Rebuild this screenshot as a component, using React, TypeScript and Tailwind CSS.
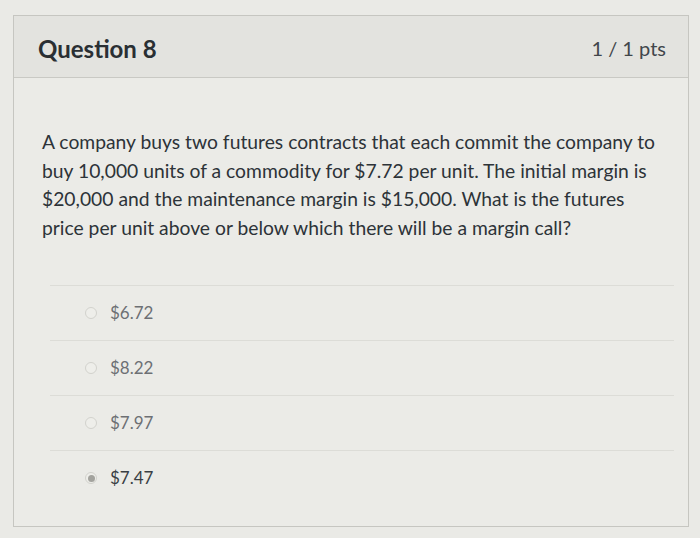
import React from 'react';

const answers = [
  { label: '$6.72', selected: false },
  { label: '$8.22', selected: false },
  { label: '$7.97', selected: false },
  { label: '$7.47', selected: true },
];

const Radio: React.FC<{ selected: boolean }> = ({ selected }) => (
  <span className="flex h-[12px] w-[12px] items-center justify-center rounded-full border border-[#d2d2cd] bg-[#eeeeea]">
    {selected && <span className="h-[7px] w-[7px] rounded-full bg-[#a3a39e]" />}
  </span>
);

const App: React.FC = () => {
  return (
    <div
      className="h-[538px] w-[700px] overflow-hidden bg-[#eaeae6] pl-[13px] pt-[15px]"
      style={{ fontFamily: 'Lato, "Open Sans", sans-serif' }}
    >
      <div className="flex h-[512px] w-[676px] flex-col border border-[#c6c6c1] bg-[#ebebe7]">
        {/* header */}
        <div className="flex h-[62px] items-center justify-between border-b border-[#c9c9c4] bg-[#e3e3df] pl-[24px] pr-[22px]">
          <h2 className="pt-[4px] text-[24px] font-bold text-[#2a2f33]">Question 8</h2>
          <span className="pt-[2px] text-[20px] text-[#41464b]">1 / 1 pts</span>
        </div>

        {/* question body */}
        <div className="pl-[28px] pr-[20px] pt-[50px]">
          <p className="text-[19.3px] leading-[28.5px] text-[#2d3338]">
            A company buys two futures contracts that each commit the company to buy 10,000 units
            of a commodity for $7.72 per unit. The initial margin is $20,000 and the maintenance
            margin is $15,000. What is the futures price per unit above or below which there will
            be a margin call?
          </p>
        </div>

        {/* answers */}
        <div className="mt-[43px] ml-[36px] mr-[14px]">
          {answers.map((a) => (
            <div
              key={a.label}
              className="flex h-[55px] items-center gap-[13px] border-t border-[#dcdcd7] pl-[35px]"
            >
              <Radio selected={a.selected} />
              <span
                className={
                  a.selected
                    ? 'text-[17px] text-[#3a3f44]'
                    : 'text-[17px] text-[#6d7074]'
                }
              >
                {a.label}
              </span>
            </div>
          ))}
        </div>
      </div>
    </div>
  );
};

export default App;
